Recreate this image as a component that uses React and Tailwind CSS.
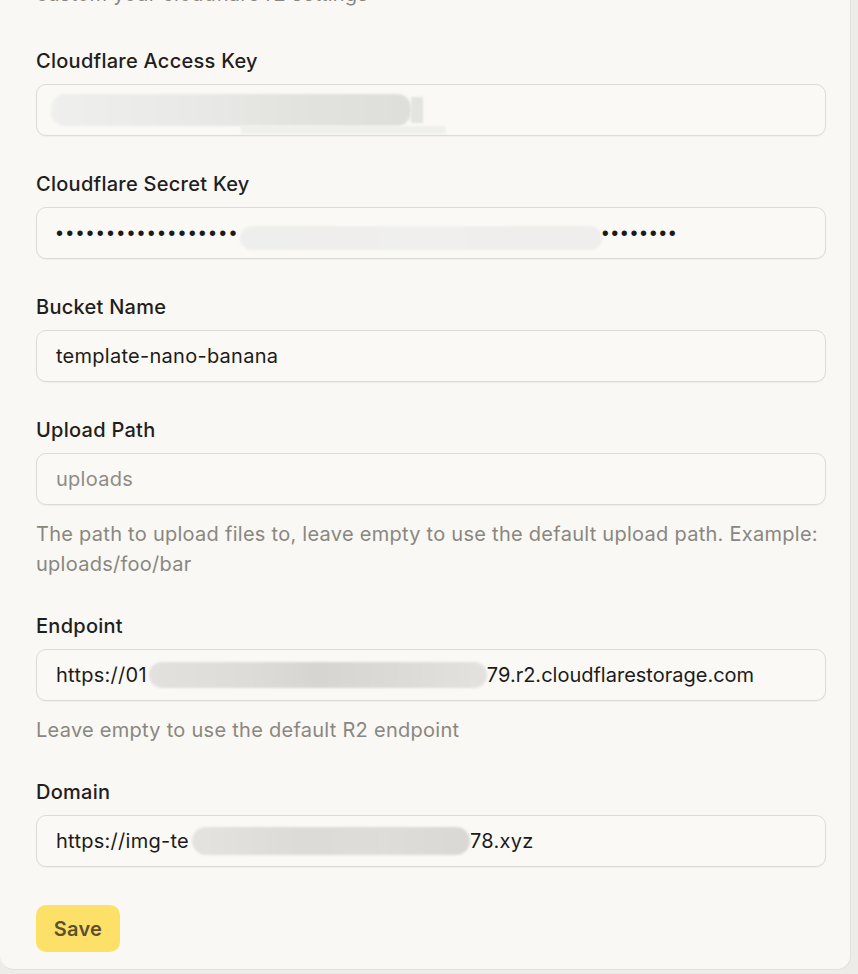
const font = { fontFamily: 'Inter, "Noto Sans", sans-serif' };

const Field = ({ label, children, help }) => (
  <div className="flex flex-col">
    <label className="text-[20px] leading-[28px] font-medium text-[#1f1e1c] mb-[9px]">{label}</label>
    <div className="h-[52px] rounded-[10px] border border-[#dddbd5] bg-[#faf9f6] shadow-[0_1px_1px_rgba(0,0,0,0.04)] px-[19px] flex items-center text-[20px] text-[#1c1b19] overflow-hidden whitespace-nowrap">
      {children}
    </div>
    {help && <p className="mt-[14px] -mb-[1px] text-[20px] leading-[30px] text-[#8a8780]">{help}</p>}
  </div>
);

const Blur = ({ w, h = 28, tone = '#e7e6e2', className = '' }) => (
  <span
    className={`inline-block rounded-[14px] blur-[1px] ${className}`}
    style={{ width: w, height: h, background: tone }}
  />
);

export default function App() {
  return (
    <div className="min-h-screen bg-[#edece9] tracking-[0.27px]" style={font}>
      <div className="w-[851px] bg-[#f9f8f5] rounded-b-[14px] border-r border-b border-[#e3e1dc] pl-[36px] pr-[24px] pb-[17px] overflow-hidden">
        <p className="-mt-[21px] text-[20px] leading-[30px] text-[#8a8780]">custom your cloudflare r2 settings</p>

        <div className="mt-[38px] flex flex-col gap-[34px]">
          <Field label="Cloudflare Access Key">
            <span className="relative -ml-[5px] flex items-center">
              <Blur w={360} h={32} tone="linear-gradient(90deg,#efefed 0%,#e9e9e7 40%,#e2e2df 70%,#dededb 100%)" />
              <span className="inline-block w-[12px] h-[26px] bg-[#e3e3e0] blur-[1px]" />
              <span className="absolute left-[190px] top-[32px] w-[205px] h-[8px] bg-[#efefec] blur-[1px]" />
            </span>
          </Field>

          <Field label="Cloudflare Secret Key">
            <span className="flex items-center">
              <span className="text-[20px] tracking-[3.2px] text-[#1a1a1a]" style={{ fontFamily: '"Liberation Sans", sans-serif' }}>
                ••••••••••••••••••
              </span>
              <Blur w={362} h={24} tone="linear-gradient(90deg,#eeeeec,#f0efed 50%,#efeeec)" className="mt-[10px]" />
              <span className="text-[20px] tracking-[2.6px] text-[#1a1a1a]" style={{ fontFamily: '"Liberation Sans", sans-serif' }}>
                ••••••••
              </span>
            </span>
          </Field>

          <Field label="Bucket Name">template-nano-banana</Field>

          <Field
            label="Upload Path"
            help="The path to upload files to, leave empty to use the default upload path. Example: uploads/foo/bar"
          >
            <span className="text-[#8f8c86]">uploads</span>
          </Field>

          <Field label="Endpoint" help="Leave empty to use the default R2 endpoint">
            <span>https://01</span>
            <Blur w={338} h={26} tone="linear-gradient(90deg,#e2e1de,#dddcd9 30%,#d6d5d2 50%,#dcdbd8 75%,#e3e2df)" className="ml-[2px] rounded-[4px]" />
            <span className="tracking-[0px]">79.r2.cloudflarestorage.com</span>
          </Field>

          <Field label="Domain">
            <span>https://img-te</span>
            <Blur w={278} h={28} tone="linear-gradient(90deg,#e4e3e0,#dcdbd8 40%,#dedddA 70%,#d9d8d5)" className="ml-[3px] rounded-[6px]" />
            <span>78.xyz</span>
          </Field>
        </div>

        <button className="mt-[38px] h-[47px] w-[84px] rounded-[10px] bg-[#fde068] text-[20px] font-semibold text-[#5b5131]">
          Save
        </button>
      </div>
    </div>
  );
}
